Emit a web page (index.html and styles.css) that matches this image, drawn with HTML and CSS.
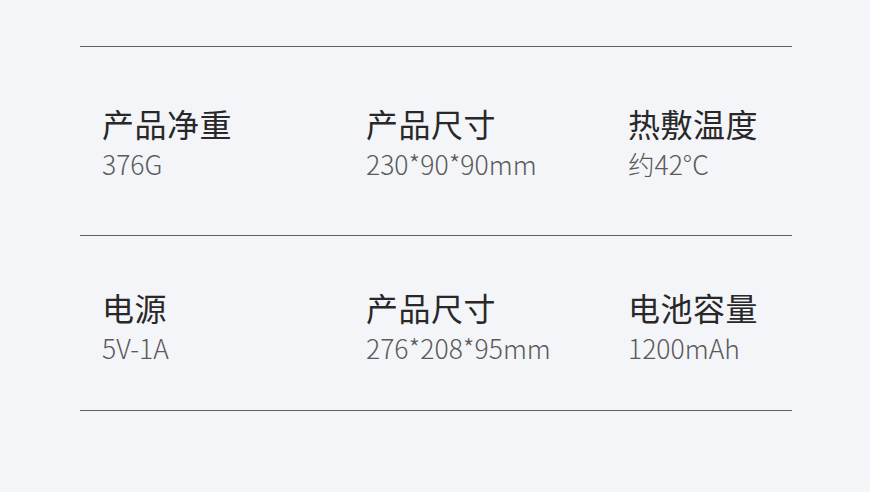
FILE: index.html
```html
<!DOCTYPE html>
<html lang="zh">
<head>
<meta charset="utf-8">
<link rel="stylesheet" href="styles.css">
</head>
<body>
<div class="specs">
  <div class="row row-first">
    <div class="item"><div class="label">产品净重</div><div class="value">376G</div></div>
    <div class="item"><div class="label">产品尺寸</div><div class="value">230*90*90mm</div></div>
    <div class="item"><div class="label">热敷温度</div><div class="value">约42°C</div></div>
  </div>
  <div class="row row-second">
    <div class="item"><div class="label">电源</div><div class="value">5V-1A</div></div>
    <div class="item"><div class="label">产品尺寸</div><div class="value">276*208*95mm</div></div>
    <div class="item"><div class="label">电池容量</div><div class="value">1200mAh</div></div>
  </div>
</div>
</body>
</html>
```

FILE: styles.css
```css
html, body {
  margin: 0;
  padding: 0;
}
body {
  background: #f4f5f9;
  width: 870px;
  height: 492px;
  overflow: hidden;
  font-family: "Noto Sans CJK SC", "Noto Sans", sans-serif;
}
.specs {
  margin-left: 80px;
  width: 712px;
  padding-top: 46px;
  border-bottom: 1px solid #5e6064;
}
.row {
  border-top: 1px solid #5e6064;
  display: grid;
  grid-template-columns: 264px 262px 186px;
  padding-left: 22px;
}
.row-first {
  padding-top: 60px;
  padding-bottom: 58px;
}
.row-second {
  padding-top: 55px;
  padding-bottom: 49px;
}
.label {
  font-size: 32px;
  line-height: 32px;
  color: #282828;
  font-weight: 400;
  letter-spacing: 0.5px;
}
.value {
  margin-top: 11px;
  font-size: 26.5px;
  line-height: 27px;
  color: #5a5a5a;
  font-weight: 300;
}
```
